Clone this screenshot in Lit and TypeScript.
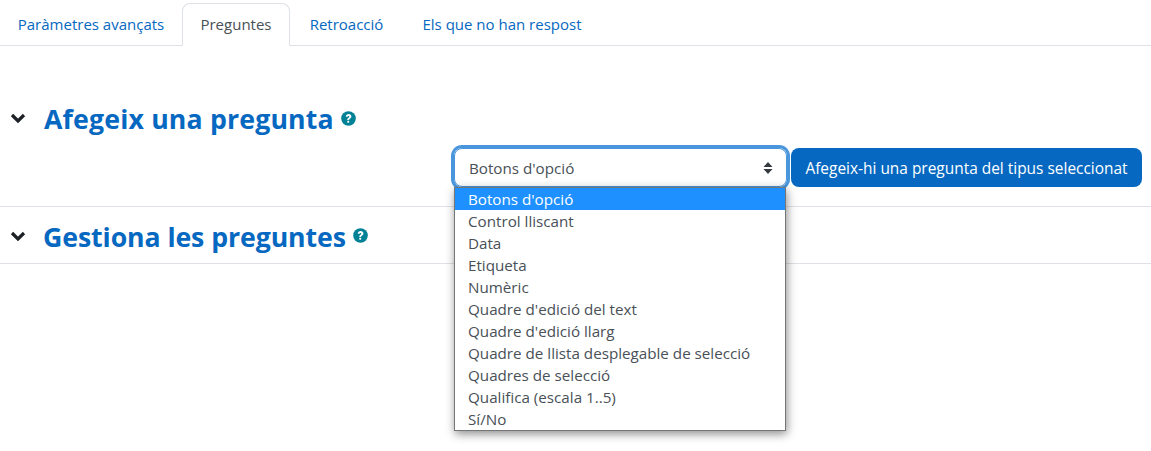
import { LitElement, html, css, svg } from "lit";
import { customElement } from "lit/decorators.js";

const options = [
  "Botons d'opció",
  "Control lliscant",
  "Data",
  "Etiqueta",
  "Numèric",
  "Quadre d'edició del text",
  "Quadre d'edició llarg",
  "Quadre de llista desplegable de selecció",
  "Quadres de selecció",
  "Qualifica (escala 1..5)",
  "Sí/No",
];

const chevron = svg`<svg class="chev" viewBox="0 0 16 12" width="16" height="12" aria-hidden="true"><path d="M2 3 L8 9 L14 3" fill="none" stroke="#1d2125" stroke-width="3.200"/></svg>`;
const help = svg`<svg class="help" viewBox="0 0 16 16" width="15" height="15" aria-hidden="true"><circle cx="8" cy="8" r="7.800" fill="#008196"/><path d="M5.100 6.200C5.200 4.400 6.500 3.300 8.100 3.300c1.700 0 3 1.100 3 2.600 0 1.300-.8 1.800-1.600 2.300-.6.4-.8.6-.8 1.300H6.700c0-1.300.5-1.900 1.300-2.400.6-.4.9-.7.9-1.100 0-.5-.4-.8-.9-.8-.6 0-1 .4-1 1z" fill="#fff"/><rect x="6.700" y="10.300" width="2" height="2.100" rx=".3" fill="#fff"/></svg>`;

@customElement("app-root")
export class AppRoot extends LitElement {
  static styles = css`
    :host {
      display: block;
      width: 1151px;
      height: 451px;
      background: #fff;
      font-family: "Open Sans", "Noto Sans", sans-serif;
      font-size: 15.2px;
      color: #495057;
      overflow: hidden;
      position: relative;
    }
    .tabs {
      display: flex;
      height: 46px;
      box-sizing: border-box;
      border-bottom: 1px solid #dee2e6;
      padding-top: 3px;
      font-size: 15px;
    }
    .tab {
      box-sizing: border-box;
      height: 43px;
      padding-bottom: 2px;
      display: flex;
      align-items: center;
      justify-content: center;
      color: #0668c0;
      white-space: nowrap;
      border: 1px solid transparent;
      border-radius: 8px 8px 0 0;
    }
    .tab.active {
      color: #495057;
      background: #fff;
      border-color: #dee2e6 #dee2e6 #fff;
    }
    .t1 { width: 182px; }
    .t2 { width: 108px; }
    .t3 { width: 113px; }
    .t4 { width: 198px; }
    .sec1 {
      height: 161px;
      box-sizing: border-box;
      border-bottom: 1px solid #dee2e6;
      padding-top: 54px;
    }
    .sec2 {
      height: 57px;
      box-sizing: border-box;
      border-bottom: 1px solid #dee2e6;
      padding-top: 11px;
    }
    .head {
      display: flex;
      align-items: flex-start;
      height: 38px;
    }
    .chev { margin: 12px 0 0 10px; flex: none; }
    h2 {
      margin: 0 0 0 18px;
      font-size: 26.7px;
      line-height: 38px;
      font-weight: 700;
      color: #0668c0;
      white-space: nowrap;
    }
    .sec1 h2 { letter-spacing: 0.16px; }
    .sec2 h2 { margin-left: 17px; letter-spacing: -0.09px; }
    .help { margin: 10px 0 0 7px; flex: none; }
    .sec1 .help { margin-top: 11px; }
    .controls {
      display: flex;
      justify-content: flex-end;
      gap: 4px;
      padding-right: 9px;
      margin-top: 10px;
    }
    .select {
      box-sizing: border-box;
      width: 333px;
      height: 39px;
      border: 1px solid #4a96dd;
      border-radius: 8px;
      box-shadow: 0 0 0 3px #4a96dd;
      display: flex;
      align-items: center;
      justify-content: space-between;
      padding: 0 13px 0 14px;
    }
    .button {
      box-sizing: border-box;
      height: 39px;
      width: 351px;
      border-radius: 8px;
      background: #0668c0;
      color: #fff;
      display: flex;
      align-items: center;
      justify-content: center;
      white-space: nowrap;
      font-size: 15.45px;
    }
    .menu {
      position: absolute;
      left: 454px;
      top: 187px;
      width: 332px;
      box-sizing: border-box;
      background: #fff;
      border: 1px solid #767676;
      box-shadow: 1px 3px 9px rgba(0, 0, 0, 0.45);
    }
    .opt {
      height: 22px;
      line-height: 22px;
      padding-left: 13px;
      white-space: nowrap;
    }
    .opt.sel {
      background: #1e90ff;
      color: #fff;
    }
  `;

  render() {
    return html`
      <nav class="tabs">
        <div class="tab t1">Paràmetres avançats</div>
        <div class="tab t2 active">Preguntes</div>
        <div class="tab t3">Retroacció</div>
        <div class="tab t4">Els que no han respost</div>
      </nav>
      <section class="sec1">
        <div class="head">${chevron}<h2>Afegeix una pregunta</h2>${help}</div>
        <div class="controls">
          <div class="select">
            <span>Botons d'opció</span>
            <svg viewBox="0 0 10 14" width="10" height="14" aria-hidden="true"><path d="M5 1 L9.500 6 H.5z M5 13 L9.500 8 H.5z" fill="#343a40"/></svg>
          </div>
          <div class="button">Afegeix-hi una pregunta del tipus seleccionat</div>
        </div>
      </section>
      <section class="sec2">
        <div class="head">${chevron}<h2>Gestiona les preguntes</h2>${help}</div>
      </section>
      <div class="menu">
        ${options.map((o, i) => html`<div class="opt ${i === 0 ? "sel" : ""}">${o}</div>`)}
      </div>
    `;
  }
}
